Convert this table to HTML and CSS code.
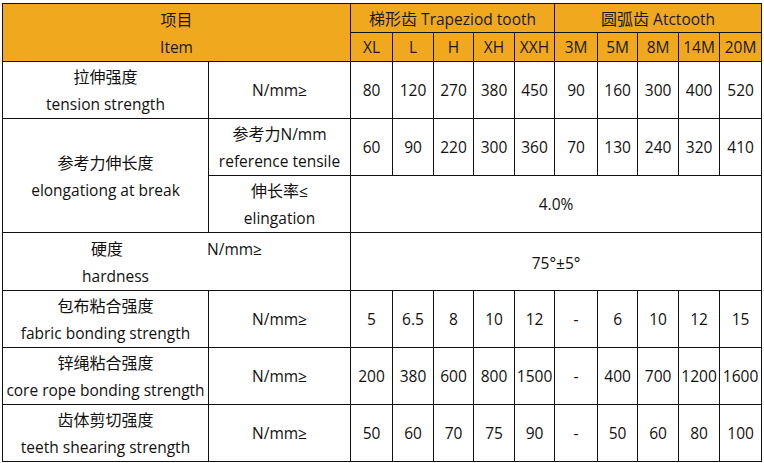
FILE: index.html
```html
<!DOCTYPE html>
<html>
<head>
<meta charset="utf-8">
<link rel="stylesheet" href="styles.css">
</head>
<body>
<table class="spec">
  <colgroup>
    <col class="c-name"><col class="c-unit">
    <col class="c42"><col class="c41"><col class="c40"><col class="c41"><col class="c40">
    <col class="c43"><col class="c40"><col class="c41"><col class="c41"><col class="c42">
  </colgroup>
  <tr class="h-row">
    <td class="head item" colspan="2" rowspan="2"><div class="hl"><span class="cjk">项目</span></div><div class="hl">Item</div></td>
    <td class="head" colspan="5"><div class="hl"><span class="cjk">梯形齿</span> Trapeziod tooth</div></td>
    <td class="head" colspan="5"><div class="hl"><span class="cjk">圆弧齿</span> Atctooth</div></td>
  </tr>
  <tr class="h-row">
    <td class="head">XL</td><td class="head">L</td><td class="head">H</td><td class="head">XH</td><td class="head">XXH</td>
    <td class="head">3M</td><td class="head">5M</td><td class="head">8M</td><td class="head">14M</td><td class="head">20M</td>
  </tr>
  <tr class="r57">
    <td><div class="ln"><span class="cjk">拉伸强度</span></div><div class="ln">tension strength</div></td>
    <td>N/mm≥</td>
    <td>80</td><td>120</td><td>270</td><td>380</td><td>450</td>
    <td>90</td><td>160</td><td>300</td><td>400</td><td>520</td>
  </tr>
  <tr class="r57">
    <td rowspan="2"><div class="ln"><span class="cjk">参考力伸长度</span></div><div class="ln">elongationg at break</div></td>
    <td><div class="ln"><span class="cjk">参考力</span>N/mm</div><div class="ln">reference tensile</div></td>
    <td>60</td><td>90</td><td>220</td><td>300</td><td>360</td>
    <td>70</td><td>130</td><td>240</td><td>320</td><td>410</td>
  </tr>
  <tr class="r56">
    <td><div class="ln"><span class="cjk">伸长率</span>≤</div><div class="ln">elingation</div></td>
    <td colspan="10">4.0%</td>
  </tr>
  <tr class="r58">
    <td colspan="2"><div class="ln"><span class="cjk">硬度</span><span class="hard-unit">N/mm≥</span></div><div class="ln"><span class="hard-en">hardness</span></div></td>
    <td colspan="10" class="low">75°±5°</td>
  </tr>
  <tr class="r57">
    <td><div class="ln"><span class="cjk">包布粘合强度</span></div><div class="ln">fabric bonding strength</div></td>
    <td>N/mm≥</td>
    <td>5</td><td>6.5</td><td>8</td><td>10</td><td>12</td>
    <td>-</td><td>6</td><td>10</td><td>12</td><td>15</td>
  </tr>
  <tr class="r57">
    <td><div class="ln"><span class="cjk">锌绳粘合强度</span></div><div class="ln">core rope bonding strength</div></td>
    <td>N/mm≥</td>
    <td>200</td><td>380</td><td>600</td><td>800</td><td>1500</td>
    <td>-</td><td>400</td><td>700</td><td>1200</td><td>1600</td>
  </tr>
  <tr class="r56">
    <td><div class="ln"><span class="cjk">齿体剪切强度</span></div><div class="ln">teeth shearing strength</div></td>
    <td>N/mm≥</td>
    <td>50</td><td>60</td><td>70</td><td>75</td><td>90</td>
    <td>-</td><td>50</td><td>60</td><td>80</td><td>100</td>
  </tr>
</table>
</body>
</html>
```
FILE: styles.css
```css
html, body {
  margin: 0;
  background: #ffffff;
}
body {
  padding: 3px 2px 0 2px;
  font-family: "Open Sans", "Noto Sans CJK SC", sans-serif;
  font-size: 15.5px;
  color: #111;
}
.cjk {
  font-family: "Noto Sans CJK SC", sans-serif;
  font-size: 16px;
}
.spec {
  border-collapse: collapse;
  table-layout: fixed;
  width: 759px;
}
.spec td {
  border: 1px solid #111;
  padding: 0;
  text-align: center;
  vertical-align: middle;
  white-space: nowrap;
  overflow: visible;
  line-height: 20px;
}
.c-name { width: 206px; }
.c-unit { width: 142px; }
.c40 { width: 40px; }
.c41 { width: 41px; }
.c42 { width: 42px; }
.c43 { width: 43px; }
.h-row { height: 29px; }
.r56 { height: 56px; }
.r57 { height: 57px; }
.r58 { height: 58px; }
.spec td.head {
  background: #f0a91f;
  color: #1a1a1a;
}
.hl {
  height: 28px;
  line-height: 28px;
  overflow: visible;
}
.ln {
  height: 28px;
  line-height: 28px;
  overflow: visible;
}
.hard-unit {
  margin-left: 84px;
}
.hard-en {
  display: inline-block;
  margin-right: 122px;
}
.low {
  padding-top: 2px !important;
}
```
